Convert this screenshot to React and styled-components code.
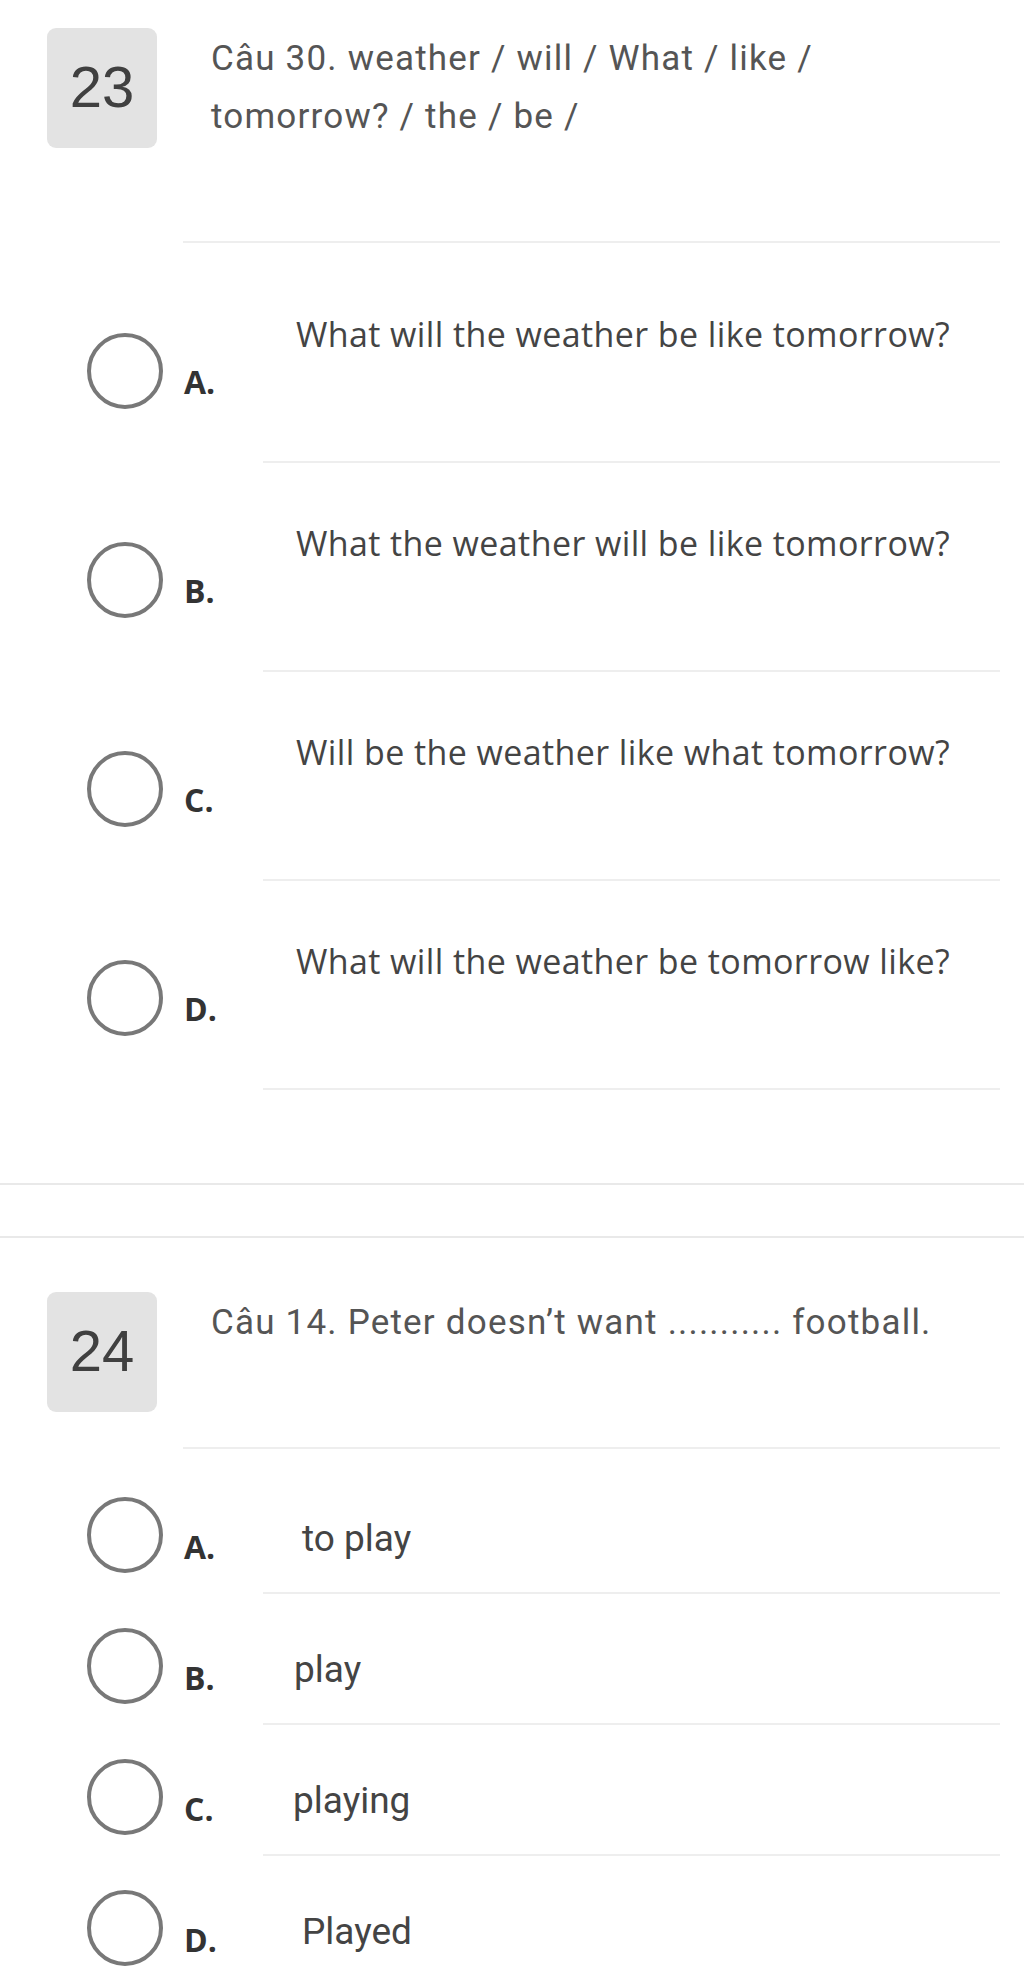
import React from "react";
import styled, { createGlobalStyle } from "styled-components";

const GlobalStyle = createGlobalStyle`
  body {
    margin: 0;
    background: #ffffff;
    font-family: Roboto, "Liberation Sans", sans-serif;
  }
`;

const Page = styled.div`
  width: 1024px;
  background: #fff;
`;

const Card = styled.section`
  padding: ${(p) => (p.first ? "28px" : "54px")} 0 93px;
  border-top: ${(p) => (p.first ? "none" : "2px solid #e9e9e9")};
  border-bottom: 2px solid #e9e9e9;
  margin-bottom: 51px;
`;

const QuestionHead = styled.div`
  display: flex;
  align-items: flex-start;
  padding-left: 47px;
`;

const Badge = styled.div`
  flex-shrink: 0;
  width: 110px;
  height: 120px;
  border-radius: 9px;
  background: #e3e3e3;
  display: flex;
  align-items: center;
  justify-content: center;
  font-family: "Liberation Sans", Arial, sans-serif;
  font-size: 58px;
  color: #404040;
  padding-bottom: 4px;
  box-sizing: border-box;
`;

const QuestionBody = styled.div`
  flex: 1;
  margin: 0 24px 0 26px;
  padding: 2px 0 95px 28px;
  border-bottom: 2px solid #eeeeee;
`;

const QuestionText = styled.p`
  margin: 0;
  max-width: 740px;
  font-family: Roboto, "Liberation Sans", sans-serif;
  font-size: 35px;
  line-height: 58px;
  letter-spacing: 1.2px;
  color: #555555;
`;

const OptionList = styled.div`
  margin-top: ${(p) => (p.compact ? "14px" : "11px")};
`;

const OptionRow = styled.label`
  display: flex;
  height: ${(p) => (p.compact ? "131px" : "209px")};
  cursor: pointer;
`;

const RadioCell = styled.div`
  width: 263px;
  flex-shrink: 0;
  display: flex;
  align-items: flex-start;
`;

const Radio = styled.span`
  display: block;
  width: 76px;
  height: 76px;
  box-sizing: border-box;
  border: 4px solid #787878;
  border-radius: 50%;
  margin: ${(p) => (p.compact ? "34px" : "79px")} 0 0 87px;
`;

const Letter = styled.span`
  display: block;
  margin: ${(p) => (p.compact ? "68px" : "112px")} 0 0 21px;
  font-family: "Open Sans", "Liberation Sans", sans-serif;
  font-weight: 700;
  font-size: 32px;
  line-height: 32px;
  color: #333333;
`;

const AnswerCell = styled.div`
  flex: 1;
  margin-right: 24px;
  border-bottom: 2px solid #eeeeee;
  box-sizing: border-box;
  padding: ${(p) => (p.compact ? "54px" : "57px")} 0 0 ${(p) => p.indent}px;
`;

const AnswerText = styled.span`
  display: block;
  font-family: ${(p) =>
    p.compact
      ? `Roboto, "Liberation Sans", sans-serif`
      : `"Open Sans", "Liberation Sans", sans-serif`};
  font-size: ${(p) => (p.compact ? "37px" : "34px")};
  line-height: ${(p) => (p.compact ? "44px" : "46px")};
  letter-spacing: ${(p) => (p.compact ? "0" : "0.4px")};
  color: #444444;
`;

const questions = [
  {
    number: 23,
    text: "Câu 30. weather / will / What / like / tomorrow? / the / be /",
    compact: false,
    options: [
      { key: "A", text: "What will the weather be like tomorrow?", indent: 33 },
      { key: "B", text: "What the weather will be like tomorrow?", indent: 33 },
      { key: "C", text: "Will be the weather like what tomorrow?", indent: 33 },
      { key: "D", text: "What will the weather be tomorrow like?", indent: 33 },
    ],
  },
  {
    number: 24,
    text: "Câu 14. Peter doesn’t want ........... football.",
    compact: true,
    options: [
      { key: "A", text: "to play", indent: 39 },
      { key: "B", text: "play", indent: 31 },
      { key: "C", text: "playing", indent: 30 },
      { key: "D", text: "Played", indent: 39 },
    ],
  },
];

function Question({ q, first }) {
  return (
    <Card first={first}>
      <QuestionHead>
        <Badge>{q.number}</Badge>
        <QuestionBody>
          <QuestionText>{q.text}</QuestionText>
        </QuestionBody>
      </QuestionHead>
      <OptionList compact={q.compact}>
        {q.options.map((o) => (
          <OptionRow key={o.key} compact={q.compact}>
            <RadioCell>
              <Radio compact={q.compact} />
              <Letter compact={q.compact}>{o.key}.</Letter>
            </RadioCell>
            <AnswerCell compact={q.compact} indent={o.indent}>
              <AnswerText compact={q.compact}>{o.text}</AnswerText>
            </AnswerCell>
          </OptionRow>
        ))}
      </OptionList>
    </Card>
  );
}

export default function App() {
  return (
    <>
      <GlobalStyle />
      <Page>
        {questions.map((q, i) => (
          <Question key={q.number} q={q} first={i === 0} />
        ))}
      </Page>
    </>
  );
}
